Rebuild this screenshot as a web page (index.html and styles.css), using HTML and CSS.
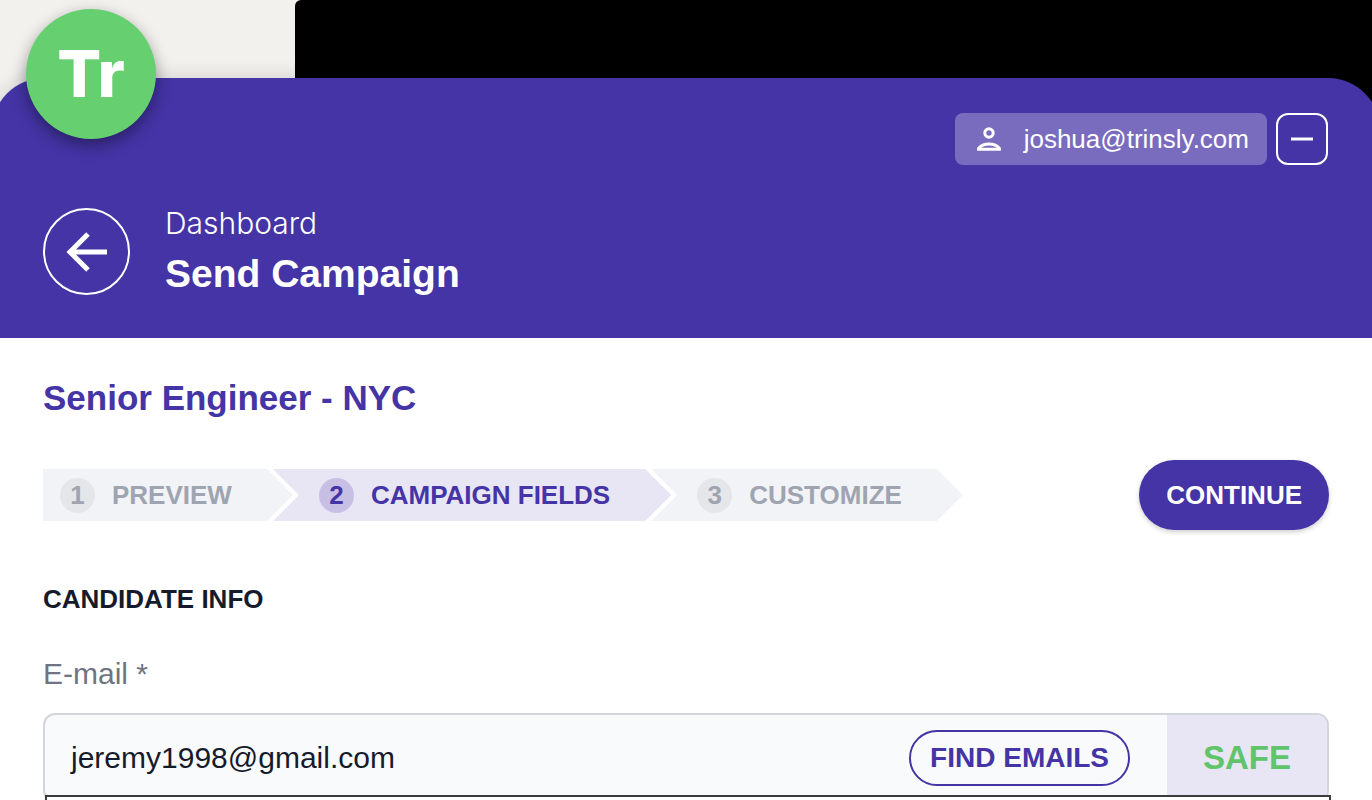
FILE: index.html
```html
<!DOCTYPE html>
<html lang="en">
<head>
  <meta charset="UTF-8">
  <meta name="viewport" content="width=device-width, initial-scale=1.0">
  <title>Send Campaign</title>
  <link rel="stylesheet" href="styles.css">
</head>
<body>

  <div class="backdrop">
    <div class="backdrop-dark"></div>
  </div>

  <div class="logo">Tr</div>

  <div class="panel">
    <!-- Header -->
    <header class="header">
      <div class="account-row">
        <button type="button" class="account">
          <svg width="24" height="24" viewBox="0 0 24 24" fill="none" stroke="currentColor" stroke-width="3" aria-hidden="true">
            <circle cx="12" cy="6" r="4.2"/>
            <path d="M1.6 22.3v-1C4 18.2 8 17 12 17s8 1.200 10.400 4.300v1z"/>
          </svg>
          <span>joshua@trinsly.com</span>
        </button>
        <button type="button" class="minimize" aria-label="Minimize">
          <svg width="22" height="4" viewBox="0 0 22 4" aria-hidden="true"><path d="M0 2h22" stroke="currentColor" stroke-width="3"/></svg>
        </button>
      </div>
      <div class="title-row">
        <button type="button" class="back" aria-label="Back">
          <svg width="42" height="42" viewBox="0 0 42 42" fill="none" stroke="currentColor" stroke-width="5" aria-hidden="true">
            <path d="M41 21H5M22 3L4 21l18 18"/>
          </svg>
        </button>
        <div>
          <a href="#" class="crumb">Dashboard</a>
          <h1>Send Campaign</h1>
        </div>
      </div>
    </header>

    <!-- Content -->
    <main class="content">
      <h2>Senior Engineer - NYC</h2>

      <div class="steps-row">
        <ol class="steps">
          <li class="step first"><span class="num">1</span>PREVIEW</li>
          <li class="step active"><span class="num">2</span>CAMPAIGN FIELDS</li>
          <li class="step"><span class="num">3</span>CUSTOMIZE</li>
        </ol>
        <button type="button" class="continue">CONTINUE</button>
      </div>

      <h3>CANDIDATE INFO</h3>
      <label for="email">E-mail *</label>
      <div class="field">
        <div class="field-box">
          <input type="email" id="email" value="jeremy1998@gmail.com">
          <button type="button" class="find">FIND EMAILS</button>
          <span class="status">SAFE</span>
        </div>
        <div class="suggestions"></div>
      </div>
    </main>
  </div>

</body>
</html>
```

FILE: styles.css
```css
* {
  box-sizing: border-box;
}
html {
  overflow: hidden;
}
body {
  margin: 0;
  height: 100vh;
  overflow: hidden;
  position: relative;
  font-family: "Liberation Sans", Arial, sans-serif;
  background-color: #fff;
  color: #161b2b;
}
button, input {
  font-family: inherit;
  margin: 0;
}
button {
  cursor: pointer;
}
svg {
  display: block;
}
.backdrop {
  height: 130px;
  padding-left: 295px;
  background-color: #f2f1ee;
}
.backdrop-dark {
  height: 100%;
  background-color: #000;
  border-top-left-radius: 6px;
}
.logo {
  position: absolute;
  top: 9px;
  left: 26px;
  width: 130px;
  height: 130px;
  border-radius: 50%;
  background-color: #66cf70;
  color: #fff;
  font-family: Inter, sans-serif;
  font-size: 65px;
  font-weight: 800;
  line-height: 130px;
  text-align: center;
  box-shadow: 0 6px 16px rgba(0, 0, 0, 0.4);
  z-index: 2;
}
.panel {
  position: relative;
  margin: -52px -8px 0;
}
.header {
  padding: 35px 52px 43px 51px;
  border-radius: 52px 52px 0 0;
  background-color: #4434a6;
  color: #fff;
  box-shadow: 0 0 20px rgba(0, 0, 0, 0.15);
}
.account-row {
  display: flex;
  justify-content: flex-end;
  gap: 9px;
}
.account {
  display: flex;
  align-items: center;
  gap: 23px;
  height: 52px;
  padding: 0 18px 0 22px;
  border: none;
  border-radius: 8px;
  background-color: #796bbe;
  color: #fff;
  font-size: 26px;
}
.minimize {
  display: flex;
  align-items: center;
  justify-content: center;
  width: 52px;
  height: 52px;
  padding: 0;
  border: 2px solid #fff;
  border-radius: 12px;
  background: none;
  color: #fff;
}
.title-row {
  display: flex;
  align-items: center;
  gap: 35px;
  margin-top: 43px;
}
.back {
  display: flex;
  align-items: center;
  justify-content: center;
  width: 87px;
  height: 87px;
  padding: 0;
  border: 2px solid #fff;
  border-radius: 50%;
  background: none;
  color: #fff;
}
.crumb {
  display: block;
  color: #fff;
  font-family: Inter, sans-serif;
  font-size: 30px;
  font-weight: 300;
  line-height: 26px;
  text-decoration: none;
}
h1 {
  margin: 18px 0 0;
  font-size: 39px;
  line-height: 40px;
}
.content {
  padding: 40px 51px 0;
  background-color: #fff;
}
h2 {
  margin: 0 0 42px;
  color: #4434a6;
  font-size: 35px;
  line-height: 40px;
}
.steps-row {
  display: flex;
  align-items: center;
  justify-content: space-between;
}
.steps {
  display: flex;
  margin: 0;
  padding: 0;
  list-style: none;
}
.step {
  display: flex;
  align-items: center;
  gap: 17px;
  height: 52px;
  margin-left: -20px;
  padding: 0 61px 0 46px;
  background-color: #f2f3f6;
  color: #9ea4b0;
  font-size: 26px;
  font-weight: bold;
  white-space: nowrap;
  clip-path: polygon(0 0, calc(100% - 26px) 0, 100% 50%, calc(100% - 26px) 100%, 0 100%, 26px 50%);
}
.step.first {
  margin-left: 0;
  padding-left: 17px;
  clip-path: polygon(0 0, calc(100% - 26px) 0, 100% 50%, calc(100% - 26px) 100%, 0 100%);
}
.step.active {
  background-color: #e8e5f4;
  color: #4434a6;
}
.num {
  width: 35px;
  height: 35px;
  border-radius: 50%;
  background-color: #e4e6ea;
  line-height: 35px;
  text-align: center;
}
.active .num {
  background-color: #c7c0e4;
}
.continue {
  height: 70px;
  padding: 0 27px;
  border: none;
  border-radius: 35px;
  background-color: #4434a6;
  color: #fff;
  font-size: 26px;
  font-weight: bold;
  box-shadow: 0 2px 5px rgba(0, 0, 0, 0.2);
}
h3 {
  margin: 54px 0 40px;
  font-size: 26px;
  line-height: 30px;
}
label {
  display: block;
  margin-bottom: 19px;
  color: #6e7482;
  font-size: 30px;
  line-height: 40px;
}
.field {
  position: relative;
}
.field-box {
  display: flex;
  align-items: center;
  height: 90px;
  border: 2px solid #d2d5db;
  border-radius: 12px;
  background-color: #f9fafc;
  overflow: hidden;
}
.field-box input {
  flex: 1;
  min-width: 0;
  height: 100%;
  padding: 0 24px;
  border: none;
  outline: none;
  background: none;
  color: #161b2b;
  font-size: 30px;
  text-indent: 2px;
}
.find {
  height: 56px;
  margin-right: 37px;
  padding: 0 19px;
  border: 2px solid #4434a6;
  border-radius: 28px;
  background: none;
  color: #4434a6;
  font-size: 28px;
  font-weight: bold;
}
.status {
  display: flex;
  align-items: center;
  justify-content: center;
  width: 160px;
  height: 100%;
  background-color: #e8e5f4;
  color: #5fc46a;
  font-size: 33px;
  font-weight: bold;
}
/* suggestion list opens over the bottom edge of the field */
.suggestions {
  position: absolute;
  top: 82px;
  left: 2px;
  right: -2px;
  height: 120px;
  border: 2px solid #3c3c3f;
  background-color: #fff;
}
```
